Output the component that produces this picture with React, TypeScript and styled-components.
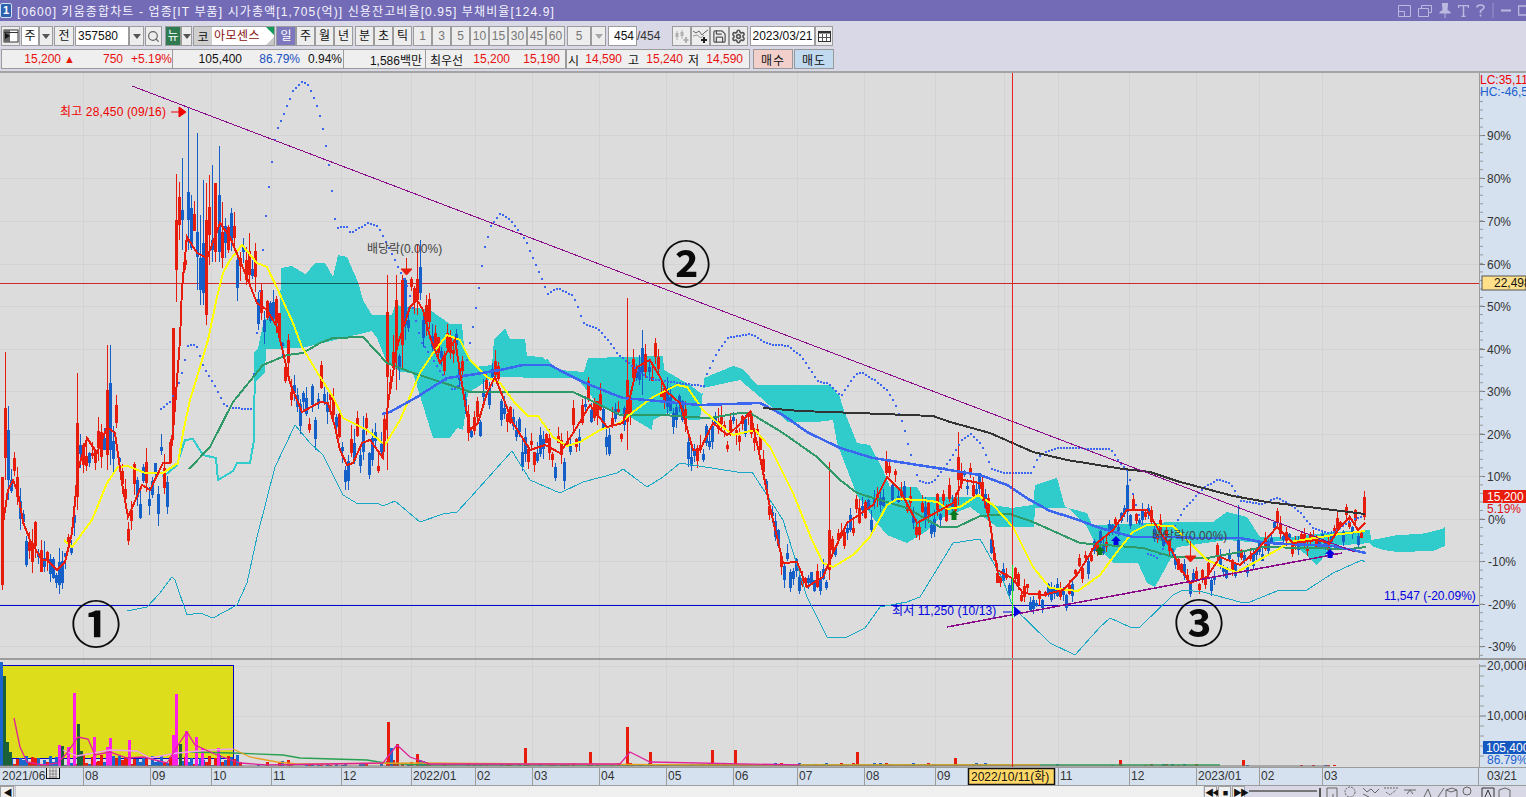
import React from 'react';
import styled, { createGlobalStyle } from 'styled-components';
import { Search, Settings, Save } from 'lucide-react';

const FONT = `"Liberation Sans", "Noto Sans CJK KR", sans-serif`;
const RED = '#e81c0c';
const CANDLE_BLUE = '#1560c8';
const AXIS_BG = '#d6e1ef';

type P = [number, number];

const GlobalStyle = createGlobalStyle`
  html, body { margin: 0; padding: 0; background: #d8d8e6; overflow: hidden; }
  body { font-family: ${FONT}; font-size: 12px; color: #111; }
`;

const Page = styled.div`
  width: 1526px;
  height: 797px;
  overflow: hidden;
  display: flex;
  flex-direction: column;
`;

const TitleBar = styled.div`
  height: 21px;
  background: #736bb5;
  color: #f4f4ff;
  display: flex;
  align-items: center;
  flex: none;
`;

const WinBadge = styled.div`
  width: 10px;
  height: 13px;
  margin: 0 5px 0 0;
  border: 1px solid #cfe0f4;
  border-radius: 2px;
  background: #2f62ae;
  color: #fff;
  font-size: 11px;
  font-weight: bold;
  line-height: 13px;
  text-align: center;
`;

const TitleText = styled.span`
  font-size: 12px;
  letter-spacing: 1.12px;
  white-space: nowrap;
`;

const TitleIcons = styled.div`
  margin-left: auto;
  display: flex;
  align-items: center;
  gap: 7px;
  margin-right: -2px;
`;

const Toolbars = styled.div`
  height: 50px;
  background: #d8d8e6;
  flex: none;
  padding-left: 1px;
  box-sizing: border-box;
`;

const Row1 = styled.div`
  display: flex;
  height: 20px;
  margin-top: 5px;
  align-items: stretch;
`;

const Row2 = styled.div`
  display: flex;
  height: 20px;
  margin-top: 3px;
  align-items: stretch;
`;

const Btn = styled.div<{
  $w: number;
  $gap?: number;
  $before?: number;
  $off?: boolean;
  $tone?: 'sel' | 'green' | 'white';
  $align?: 'flex-start' | 'flex-end';
}>`
  width: ${p => p.$w}px;
  margin-right: ${p => p.$gap ?? 0}px;
  margin-left: ${p => p.$before ?? 0}px;
  padding: 0 ${p => (p.$align ? 2 : 0)}px;
  box-sizing: border-box;
  border: 1px solid #9c9c9c;
  background: ${p => (p.$tone === 'sel' ? '#7d78bd' : p.$tone === 'green' ? '#2f7a50' : p.$tone === 'white' ? '#fff' : '#ededed')};
  color: ${p => (p.$off ? '#777' : p.$tone === 'sel' || p.$tone === 'green' ? '#fff' : '#111')};
  display: flex;
  align-items: center;
  justify-content: ${p => p.$align ?? 'center'};
  flex: none;
  font-size: 12px;
  line-height: 1;
`;

const Caret = styled.div<{ $off?: boolean }>`
  width: 0;
  height: 0;
  border-left: 4px solid transparent;
  border-right: 4px solid transparent;
  border-top: 5px solid ${p => (p.$off ? '#a8a8a8' : '#555')};
`;

const NameBox = styled.div`
  width: 82px;
  margin-right: 1px;
  box-sizing: border-box;
  border: 1px solid #9c9c9c;
  background: #fff;
  display: flex;
  position: relative;
  flex: none;
`;

const NameTag = styled.div`
  width: 18px;
  background: #cfcfcf;
  display: flex;
  align-items: center;
  justify-content: center;
`;

const NameText = styled.div`
  color: #8a0f0f;
  padding-left: 2px;
  line-height: 18px;
  letter-spacing: 0.5px;
`;

const CornerTop = styled.div`
  position: absolute;
  right: 0;
  top: 0;
  border-top: 8px solid #129a5a;
  border-left: 8px solid transparent;
`;

const CornerBottom = styled.div`
  position: absolute;
  right: 0;
  bottom: 0;
  border-bottom: 8px solid #c8c8c8;
  border-left: 8px solid transparent;
`;

const Plain = styled.div<{ $w: number }>`
  width: ${p => p.$w}px;
  color: #333;
  line-height: 20px;
  flex: none;
`;

const QuoteGroup = styled.div<{ $w: number; $gap?: number }>`
  width: ${p => p.$w}px;
  margin-right: ${p => p.$gap ?? 0}px;
  box-sizing: border-box;
  background: #efefef;
  border: 1px solid #9c9c9c;
  border-left-width: ${p => (p.$gap === undefined ? 0 : 1)}px;
  display: flex;
  align-items: center;
  flex: none;
  white-space: nowrap;
`;

const Val = styled.span<{ $w: number; $c?: string }>`
  width: ${p => p.$w}px;
  color: ${p => p.$c ?? '#111'};
  text-align: right;
  flex: none;
`;

const UpMark = styled.span`
  width: 14px;
  color: ${RED};
  font-size: 11px;
  text-align: right;
  flex: none;
`;

const Trade = styled.div<{ $bg: string; $gap?: number }>`
  width: 40px;
  margin-right: ${p => p.$gap ?? 0}px;
  box-sizing: border-box;
  border: 1px solid #999;
  background: ${p => p.$bg};
  display: flex;
  align-items: center;
  justify-content: center;
  letter-spacing: 1px;
  flex: none;
`;

const Chart = styled.div`
  flex: none;
  border-top: 2px solid #a4a4a4;
  background: #dcdcdc;
  display: flex;
  flex-direction: column;
`;

const Pane = styled.div<{ $h: number; $rule: number }>`
  height: ${p => p.$h}px;
  display: flex;
  border-bottom: ${p => p.$rule}px solid #9c9c9c;
  flex: none;
`;

const PlotSvg = styled.svg`
  display: block;
  width: 1479px;
  height: 100%;
  flex: none;
  font-family: ${FONT};
  font-size: 12px;
`;

const AxisSvg = styled.svg`
  display: block;
  width: 47px;
  height: 100%;
  flex: none;
  background: ${AXIS_BG};
  font-family: ${FONT};
  font-size: 12px;
`;

const DateSvg = styled.svg`
  display: block;
  width: 1526px;
  height: 100%;
  background: ${AXIS_BG};
  font-family: ${FONT};
  font-size: 12px;
`;

const Label = styled.text<{ $c?: string; $ls?: number }>`
  fill: ${p => p.$c ?? '#333'};
  letter-spacing: ${p => p.$ls ?? 0}px;
`;

const BigMark = styled.text`
  fill: #0a0a0a;
  font-size: 50px;
  font-weight: 700;
  font-family: "Noto Sans CJK KR", sans-serif;
  text-anchor: middle;
`;

const Bottom = styled.div`
  height: 11px;
  background: #d8d8e6;
  display: flex;
  overflow: hidden;
  flex: none;
`;

const ScrollBtn = styled.div<{ $w: number; $gap?: number }>`
  width: ${p => p.$w}px;
  height: 16px;
  margin-right: ${p => p.$gap ?? 0}px;
  box-sizing: border-box;
  background: #f0f0f0;
  border: 1px solid #a0a0a0;
  flex: none;
  color: #111;
  font-size: 9px;
  line-height: 12px;
  text-align: center;
  letter-spacing: -2px;
`;

const ScrollTrack = styled.div`
  width: 1187px;
  margin-right: 1px;
  height: 16px;
  background: #f0f0f0;
  border-left: 1px solid #c8c8c8;
  flex: none;
`;

const Slider = styled.div`
  width: 72px;
  height: 16px;
  margin: 0 3px 0 4px;
  flex: none;
  position: relative;
  &::before {
    content: '';
    position: absolute;
    left: 0;
    right: 4px;
    top: 4px;
    height: 2px;
    background: #777;
  }
  &::after {
    content: '';
    position: absolute;
    right: 0;
    top: 2px;
    width: 2px;
    height: 12px;
    background: #555;
  }
`;

const ToolSvg = styled.svg`
  display: block;
  flex: none;
  width: 190px;
  height: 11px;
`;

// ----- chart data, in page coordinates -----

const MA5: P[] = [[2,530],[8,490],[13,480],[18,493],[23,522],[30,540],[42,560],[47,560],[57,570],[65,562],[72,533],[78,470],[87,438],[97,453],[107,427],[115,433],[122,483],[128,517],[142,485],[150,490],[163,463],[170,463],[175,407],[180,340],[182,288],[187,237],[197,253],[207,258],[220,223],[230,237],[243,268],[257,303],[267,310],[277,327],[283,352],[290,383],[302,412],[320,402],[328,403],[335,427],[340,450],[347,465],[353,463],[362,443],[370,440],[383,458],[388,403],[393,373],[397,347],[410,307],[417,300],[423,310],[430,337],[440,363],[455,340],[465,403],[470,430],[478,423],[487,393],[495,377],[513,423],[530,450],[545,445],[560,453],[575,430],[590,405],[607,427],[623,423],[630,397],[637,367],[650,360],[660,377],[667,392],[680,403],[693,450],[700,450],[713,423],[727,435],[737,427],[750,412],[760,457],[770,507],[783,563],[797,562],[807,587],[823,577],[833,553],[847,523],[873,505],[887,477],[900,490],[917,523],[937,512],[953,503],[963,480],[980,483],[990,523],[997,570],[1012,578],[1023,593],[1033,594],[1043,595],[1063,590],[1077,575],[1097,543],[1113,530],[1127,510],[1147,510],[1157,527],[1170,547],[1180,567],[1190,583],[1207,577],[1220,557],[1240,565],[1257,550],[1277,527],[1293,543],[1317,540],[1330,543],[1340,527],[1350,517],[1358,530],[1365,523]];

const MA20: P[] = [[64,540],[72,547],[92,520],[107,483],[118,467],[128,466],[145,473],[163,473],[178,463],[183,433],[190,400],[197,377],[208,340],[217,297],[223,273],[230,260],[242,245],[257,263],[267,267],[278,290],[293,323],[302,347],[317,372],[333,397],[343,418],[367,430],[385,445],[400,420],[420,373],[433,353],[447,335],[460,340],[470,360],[487,377],[500,383],[515,403],[528,416],[538,416],[553,437],[567,446],[580,442],[600,430],[620,423],[633,412],[653,397],[677,385],[687,387],[703,410],[720,425],[733,435],[755,430],[770,447],[793,493],[812,540],[823,563],[833,567],[853,555],[870,537],[887,505],[897,499],[923,500],[937,502],[948,509],[960,507],[978,495],[993,505],[1013,527],[1033,567],[1050,588],[1078,591],[1100,575],[1117,552],[1133,532],[1147,525],[1173,526],[1190,543],[1207,560],[1230,570],[1237,572],[1277,550],[1290,542],[1333,535],[1365,531]];

const MA60: P[] = [[189,469],[210,447],[233,402],[263,365],[287,355],[303,353],[320,343],[333,338],[363,337],[387,363],[413,373],[450,385],[470,392],[517,392],[543,392],[573,392],[590,400],[620,415],[663,415],[690,417],[710,418],[740,413],[750,413],[783,433],[817,457],[840,480],[857,493],[880,500],[907,508],[940,527],[957,527],[980,516],[1010,514],[1033,522],[1080,543],[1143,548],[1173,557],[1207,558],[1240,552],[1263,547],[1350,549],[1366,547]];

const MA120: P[] = [[382,414],[390,412],[417,397],[447,378],[470,375],[500,370],[523,365],[550,365],[563,372],[583,382],[610,393],[623,398],[647,400],[677,403],[700,405],[760,403],[783,415],[807,432],[840,448],[873,458],[937,468],[980,475],[1007,485],[1030,500],[1050,511],[1073,518],[1100,528],[1133,537],[1167,537],[1200,538],[1240,538],[1267,543],[1333,546],[1366,553]];

const MA240: P[] = [[763,408],[800,411],[857,413],[933,416],[950,422],[990,433],[1033,452],[1067,460],[1123,469],[1150,472],[1180,482],[1207,489],[1233,496],[1267,502],[1317,508],[1365,514]];

const BAND_LOW: P[] = [[127,611],[147,607],[160,593],[172,577],[175,580],[187,615],[200,613],[213,618],[237,605],[247,583],[257,537],[275,467],[295,425],[310,443],[323,455],[343,495],[358,504],[377,503],[383,506],[395,501],[420,522],[443,514],[457,512],[470,498],[512,451],[530,480],[560,493],[583,482],[617,473],[623,469],[647,487],[663,477],[680,463],[737,472],[752,472],[783,520],[807,597],[827,637],[847,637],[865,628],[880,607],[907,602],[920,597],[953,543],[980,539],[1003,580],[1013,607],[1050,643],[1075,655],[1100,627],[1110,618],[1130,627],[1140,627],[1173,595],[1183,590],[1203,592],[1240,602],[1250,602],[1277,591],[1307,590],[1333,573],[1362,560],[1365,562]];

const BAND_UP: P[] = [[160,408],[170,400],[180,377],[187,345],[195,343],[203,367],[213,383],[223,403],[228,407],[250,408],[252,387],[263,235],[267,195],[272,152],[275,132],[285,108],[292,90],[302,80],[308,85],[317,107],[323,132],[330,177],[333,215],[337,227],[345,225],[350,232],[367,222],[377,225],[383,237],[393,257],[407,287],[420,340],[452,390],[462,380],[470,337],[473,320],[478,287],[483,250],[490,225],[500,212],[510,220],[525,240],[543,283],[547,293],[557,287],[572,295],[578,308],[582,322],[597,328],[608,340],[617,353],[637,370],[650,378],[677,382],[703,385],[705,375],[717,350],[727,337],[750,333],[767,343],[787,345],[800,355],[817,380],[828,383],[840,395],[855,373],[862,372],[875,380],[887,390],[895,405],[903,425],[908,448],[918,480],[927,483],[935,478],[950,458],[960,440],[970,433],[980,443],[987,458],[990,468],[1003,472],[1030,472],[1037,457],[1043,452],[1058,447],[1110,448],[1120,463],[1127,470],[1133,497],[1143,530],[1147,553],[1157,557],[1173,527],[1183,508],[1203,487],[1217,478],[1230,483],[1240,500],[1260,503],[1277,497],[1287,502],[1300,512],[1312,527],[1330,533],[1350,520],[1362,515]];

const SENKOU: P[] = [[162,476],[168,473],[177,465],[185,440],[193,439],[203,455],[216,458],[218,480],[233,471],[237,463],[250,463],[254,440],[255,352]];

const CLOUD_TOP: P[] = [[255,352],[258,348],[264,320],[280,313],[281,268],[292,266],[302,272],[305,275],[315,263],[325,263],[333,277],[338,255],[347,257],[358,282],[363,300],[372,315],[392,315],[395,305],[430,310],[450,324],[462,324],[464,347],[475,367],[492,365],[494,340],[505,328],[510,339],[525,339],[527,356],[542,357],[545,360],[547,358],[552,365],[560,370],[584,372],[588,358],[663,356],[664,370],[690,385],[703,395],[704,378],[733,366],[743,369],[757,385],[830,385],[840,397],[843,408],[857,443],[870,445],[883,470],[890,487],[917,487],[923,497],[987,497],[993,505],[1012,508],[1033,505],[1035,485],[1057,478],[1065,507],[1087,513],[1092,525],[1150,523],[1177,522],[1213,522],[1227,512],[1247,517],[1260,537],[1290,537],[1333,532],[1370,530],[1371,540],[1383,538],[1397,535],[1420,534],[1430,532],[1442,529],[1445,526]];

const CLOUD_BOTTOM: P[] = [[255,382],[265,373],[266,349],[302,348],[372,331],[377,338],[387,363],[400,372],[413,373],[433,438],[450,438],[457,428],[463,430],[468,393],[493,377],[553,378],[577,378],[600,407],[630,417],[652,430],[653,420],[667,413],[690,420],[700,420],[703,388],[740,380],[760,397],[788,422],[817,422],[833,420],[837,443],[850,477],[857,495],[877,523],[887,535],[907,543],[927,531],[937,520],[970,507],[997,527],[1034,527],[1035,508],[1068,508],[1087,527],[1097,547],[1113,563],[1138,563],[1147,583],[1155,587],[1177,547],[1227,540],[1260,543],[1290,540],[1317,565],[1333,546],[1370,543],[1372,546],[1383,550],[1397,552],[1433,551],[1445,546]];

const MONTHS: { x: number; t: string }[] = [
  { x: 83, t: '08' }, { x: 150, t: '09' }, { x: 211, t: '10' }, { x: 271, t: '11' }, { x: 341, t: '12' },
  { x: 411, t: '2022/01' }, { x: 475, t: '02' }, { x: 532, t: '03' }, { x: 599, t: '04' }, { x: 666, t: '05' },
  { x: 733, t: '06' }, { x: 797, t: '07' }, { x: 864, t: '08' }, { x: 935, t: '09' }, { x: 1058, t: '11' },
  { x: 1129, t: '12' }, { x: 1196, t: '2023/01' }, { x: 1259, t: '02' }, { x: 1322, t: '03' },
];

const PCT: { y: number; t: string }[] = [
  { y: 135, t: '90%' }, { y: 178, t: '80%' }, { y: 221, t: '70%' }, { y: 264, t: '60%' }, { y: 306, t: '50%' },
  { y: 349, t: '40%' }, { y: 391, t: '30%' }, { y: 434, t: '20%' }, { y: 476, t: '10%' }, { y: 519, t: '0%' },
  { y: 561, t: '-10%' }, { y: 604, t: '-20%' }, { y: 646, t: '-30%' },
];

// x, body top, body bottom, wick top, wick bottom, red?
const KEY_CANDLES: [number, number, number, number, number, boolean][] = [
  [3,477,585,477,590,true],[6,408,458,352,480,true],[9,430,480,406,500,false],[77,423,497,373,510,true],
  [107,390,455,345,470,true],[110,383,450,345,465,false],[173,328,425,328,440,true],[177,220,270,174,302,true],
  [180,197,225,182,240,true],[183,210,220,158,250,false],[187,192,220,108,250,false],[190,208,248,195,250,false],
  [196,232,257,133,290,false],[199,258,290,215,305,false],[203,243,293,180,305,false],[205,220,315,183,325,true],
  [209,207,235,175,265,true],[212,240,250,165,262,false],[215,183,252,183,262,true],[218,195,252,146,262,false],
  [221,232,258,202,268,true],[388,312,377,275,470,true],[416,279,300,245,315,true],[419,267,293,240,300,false],
  [395,300,350,275,390,true],[401,280,345,275,370,true],[406,280,325,278,340,false],
  [627,380,422,298,450,true],[643,348,372,330,395,false],[830,530,570,462,580,true],[957,457,480,432,505,true],
  [1127,485,512,470,522,false],[1237,540,557,505,562,false],[1365,497,517,491,520,true],
];

// x, top, colour
const KEY_VOLUME: [number, number, string][] = [
  [1,662,'#1a66cc'],[4,676,'#1a6038'],[7,742,'#1a6038'],[10,752,'#1a6038'],[59,745,'#ff20e8'],[62,746,'#1a6038'],
  [68,747,'#ff20e8'],[74,693,'#ff20e8'],[78,724,'#1a6038'],[81,751,'#1a6038'],[94,737,'#ff20e8'],[107,747,'#ff20e8'],
  [110,738,'#ff20e8'],[129,740,'#ff20e8'],[173,735,'#ff20e8'],[176,694,'#ff20e8'],[180,744,'#1a6038'],[186,731,'#ff20e8'],
  [196,737,'#ff20e8'],[202,748,'#ff20e8'],[218,748,'#ff20e8'],[388,722,RED],[391,748,'#1a66cc'],[397,744,RED],
  [417,754,RED],[627,727,RED],[525,748,RED],[590,752,RED],[650,752,RED],[712,750,RED],[735,750,RED],[857,752,RED],
  [955,758,RED],[1120,760,RED],[1243,760,RED],
];

const VOL_PINK: P[] = [[14,718],[20,747],[27,762],[43,765],[58,763],[67,753],[78,737],[88,739],[95,755],[110,752],[127,758],[143,757],[167,763],[180,742],[187,732],[195,745],[217,755],[240,763],[267,765],[383,763],[397,745],[410,757],[430,764],[620,764],[630,752],[650,762],[800,765]];
const VOL_LILAC: P[] = [[63,750],[77,756],[110,750],[137,751],[150,758],[177,753],[210,750],[233,749]];
const VOL_ORANGE: P[] = [[233,749],[250,757],[277,762],[297,764],[420,763],[700,765],[1040,765]];
const VOL_GREEN: P[] = [[190,752],[233,753],[283,755],[300,758],[367,760],[385,763],[420,765],[1220,765]];

function toPoints(list: P[]): string {
  return list.map(p => p.join(',')).join(' ');
}

function yAt(path: P[], x: number): number {
  if (x <= path[0][0]) return path[0][1];
  for (let i = 1; i < path.length; i++) {
    if (x <= path[i][0]) {
      const [x0, y0] = path[i - 1];
      const [x1, y1] = path[i];
      return y0 + ((y1 - y0) * (x - x0)) / (x1 - x0 || 1);
    }
  }
  return path[path.length - 1][1];
}

function seeded(seed: number) {
  let s = seed;
  return () => {
    s = (s + 0x6d2b79f5) | 0;
    let t = Math.imul(s ^ (s >>> 15), 1 | s);
    t = (t + Math.imul(t ^ (t >>> 7), 61 | t)) ^ t;
    return ((t ^ (t >>> 14)) >>> 0) / 4294967296;
  };
}

function swing(x: number): number {
  if (x < 175) return 30;
  if (x < 260) return 36;
  if (x < 385) return 28;
  if (x < 430) return 32;
  if (x < 760) return 22;
  if (x < 1000) return 18;
  return 13;
}

type Candle = { x: number; top: number; bottom: number; hi: number; lo: number; red: boolean };

function buildCandles(): Candle[] {
  const rand = seeded(11);
  const out: Candle[] = [];
  for (let i = 0; i < 454; i++) {
    const x = Math.round(2 + i * 3.007);
    const amp = swing(x);
    const mid = yAt(MA5, x);
    const a = mid + (rand() - 0.5) * amp * 1.5;
    const b = a + (rand() - 0.5) * amp * 1.5;
    const top = Math.min(a, b);
    const bottom = Math.max(a, b) + 3;
    out.push({ x, top, bottom, hi: top - rand() * amp * 0.55, lo: bottom + rand() * amp * 0.45, red: b < a });
  }
  KEY_CANDLES.forEach(([x, top, bottom, hi, lo, red]) => {
    const c = out[Math.round((x - 2) / 3.007)];
    Object.assign(c, { top, bottom, hi, lo, red });
  });
  return out;
}

const CANDLES = buildCandles();

function buildVolumeBars() {
  const rand = seeded(5);
  const bars: { x: number; top: number; c: string }[] = [];
  for (const c of CANDLES) {
    if (c.x > 1340) continue;
    const max = c.x < 240 ? 10 : c.x < 300 ? 5 : c.x < 380 ? 2 : c.x < 430 ? 6 : c.x < 1000 ? 2 : 1;
    const show = c.x < 240 ? true : rand() > (c.x < 1000 ? 0.55 : 0.8);
    if (show) bars.push({ x: c.x, top: 766 - (rand() * max + 1), c: c.red ? RED : '#1a66cc' });
  }
  KEY_VOLUME.forEach(([x, top, c]) => bars.push({ x, top, c }));
  return bars;
}

const VOLUME = buildVolumeBars();

const DOTS: P[] = [];
for (let x = 160; x <= 1362; x += 3) DOTS.push([x, Math.round(yAt(BAND_UP, x))]);

const PanelIcon = () => (
  <svg width="16" height="16" viewBox="0 0 16 16">
    <rect x="1" y="2" width="14" height="12" fill="#fff" stroke="#333" />
    <path d="M1 2h6v12H1z" fill="#666" />
    <path d="M2 5l5 3-5 3z" fill="#111" />
    <path d="M1 4.500h14" stroke="#333" />
  </svg>
);

const CandleIcon = () => (
  <svg width="16" height="16" viewBox="0 0 16 16">
    <path d="M3 3v9M8 2v9" stroke="#b0b0b0" />
    <rect x="1.500" y="5" width="3" height="4" fill="#b0b0b0" />
    <rect x="6.500" y="4" width="3" height="4" fill="#b0b0b0" />
    <path d="M12 9v6M9.500 12h5" stroke="#b0b0b0" strokeWidth="2" />
  </svg>
);

const TrendPlusIcon = () => (
  <svg width="17" height="16" viewBox="0 0 17 16">
    <path d="M1 3l3 2 3-2 3 4 3-3 3-2" fill="none" stroke="#666" />
    <path d="M1 8l4-1 4 3 3-3" fill="none" stroke="#999" />
    <path d="M12 9v6M9 12h6" stroke="#222" strokeWidth="2" />
  </svg>
);

const CalendarIcon = () => (
  <svg width="13" height="11" viewBox="0 0 13 11">
    <rect x="0.500" y="0.500" width="12" height="10" fill="#fff" stroke="#333" />
    <rect x="0.500" y="0.500" width="12" height="2" fill="#333" />
    <path d="M4.500 3v7M8.500 3v7M1 6.500h11" stroke="#555" />
  </svg>
);

const TitleIconSet = () => (
  <TitleIcons>
    <svg width="13" height="12" viewBox="0 0 13 12"><path d="M.5.5h12v11H.5zM.5 6.500h6v5" fill="none" stroke="#bcb8e0" /></svg>
    <svg width="14" height="12" viewBox="0 0 14 12"><path d="M3.500 3.500V.5h10v7h-3M.5 3.500h10v8H.5z" fill="none" stroke="#bcb8e0" /></svg>
    <svg width="12" height="15" viewBox="0 0 12 15"><path d="M3 0h6v1.500L8.500 7 11.500 9v1.500h-5V15h-1v-4.500h-5V9L3.500 7 3 1.500z" fill="#bcb8e0" /></svg>
    <svg width="11" height="12" viewBox="0 0 11 12"><path d="M.5 3V.5h10V3M5.500.5v11M3.500 11.500h4" fill="none" stroke="#bcb8e0" strokeWidth="1.500" /></svg>
    <svg width="9" height="13" viewBox="0 0 9 13"><path d="M1 3.500C1 1.500 2.500 1 4.500 1S8 2 8 3.500 6 5.500 4.500 7v2M4.500 10.500v2" fill="none" stroke="#bcb8e0" strokeWidth="1.600" /></svg>
    <svg width="2" height="15" viewBox="0 0 2 15"><path d="M1 0v15" stroke="#9a95cc" /></svg>
    <svg width="10" height="3" viewBox="0 0 10 3"><path d="M0 1.500h10" stroke="#bcb8e0" strokeWidth="2" /></svg>
    <svg width="10" height="11" viewBox="0 0 10 11"><path d="M.5 1h12v9H.5z" fill="none" stroke="#bcb8e0" strokeWidth="1.500" /></svg>
  </TitleIcons>
);

const PricePlot = () => (
  <PlotSvg viewBox="0 73 1479 585">
    {PCT.map(p => <line key={p.y} x1="0" x2="1479" y1={p.y + 0.5} y2={p.y + 0.5} stroke="#d3d3d3" />)}
    {MONTHS.map(m => <line key={m.x} x1={m.x + 0.5} x2={m.x + 0.5} y1="73" y2="658" stroke="#d3d3d3" />)}
    <line x1="1004.500" x2="1004.500" y1="73" y2="658" stroke="#d3d3d3" />

    <polygon fill="#30cccc" shapeRendering="crispEdges" points={toPoints([...CLOUD_TOP, ...[...CLOUD_BOTTOM].reverse()])} />
    <polyline fill="none" stroke="#30cccc" strokeWidth="2" shapeRendering="crispEdges" points={toPoints(SENKOU)} />

    <line x1="0" x2="1479" y1="283.500" y2="283.500" stroke="#cc2a2a" />
    <line x1="281" x2="358" y1="283.500" y2="283.500" stroke="#155" />
    <line x1="0" x2="1479" y1="605.500" y2="605.500" stroke="#0000d0" />

    {CANDLES.map(c => (
      <g key={c.x} shapeRendering="crispEdges">
        <line x1={c.x + 0.5} x2={c.x + 0.5} y1={c.hi} y2={c.lo} stroke={c.red ? RED : CANDLE_BLUE} />
        <rect x={c.x - 1} y={c.top} width="3" height={c.bottom - c.top} fill={c.red ? RED : CANDLE_BLUE} />
      </g>
    ))}

    {DOTS.map(([x, y]) => <rect key={x} x={x} y={y} width="2" height="2" fill="#3a66f0" />)}

    <g fill="none" shapeRendering="crispEdges">
      <polyline stroke="#18a8c4" strokeWidth="1" points={toPoints(BAND_LOW)} />
      <polyline stroke="#2f9a68" strokeWidth="2" points={toPoints(MA60)} />
      <polyline stroke="#ffff00" strokeWidth="2" points={toPoints(MA20)} />
      <polyline stroke="#3a66f0" strokeWidth="2.500" points={toPoints(MA120)} />
      <polyline stroke="#333333" strokeWidth="2" points={toPoints(MA240)} />
      <polyline stroke={RED} strokeWidth="2" points={toPoints(MA5)} />
      <line x1="132" y1="86" x2="1355" y2="552" stroke="#8a0a8a" />
      <line x1="947" y1="627" x2="1342" y2="553" stroke="#8a0a8a" strokeWidth="1.500" />
    </g>

    <line x1="1012.500" x2="1012.500" y1="73" y2="658" stroke="#e82020" />
    <line x1="1012.500" x2="1012.500" y1="565" y2="618" stroke="#20e020" />

    <Label x="60" y="116" $c="#f00000" $ls={0.15}>최고 28,450 (09/16)</Label>
    <path d="M171 112h10M179 107l7 5-7 5z" fill="#f00000" stroke="#f00000" />
    <Label x="367" y="253" $c="#444">배당락(0.00%)</Label>
    <path d="M406.500 258v11M401 269h11l-5.500 6z" fill={RED} stroke={RED} />
    <Label x="1152" y="540" $c="#444">배당락(0.00%)</Label>
    <path d="M1190.500 541v15M1185 556h11l-5.500 6z" fill={RED} stroke={RED} />
    <Label x="892" y="615" $c="#0000e0" $ls={0.1}>최저 11,250 (10/13)</Label>
    <path d="M1003 612h9" stroke="#0000e0" />
    <path d="M1014 606l7 6-7 5z" fill="#0000e0" />
    <Label x="1384" y="600" $c="#0000e0">11,547 (-20.09%)</Label>

    <path d="M954 510l5 5h-2.500v5h-5v-5H949z" fill="#0a7a20" />
    <path d="M1100 546l5 5h-2.500v4h-5v-4H1095z" fill="#0a7a20" />
    <path d="M1116 536l5 5h-2.500v4h-5v-4H1111z" fill="#0000e0" />
    <path d="M1330 549l5 5h-2.500v4h-5v-4H1325z" fill="#0000e0" />

    <BigMark x="96" y="643">①</BigMark>
    <BigMark x="686" y="283">②</BigMark>
    <BigMark x="1199" y="642">③</BigMark>
  </PlotSvg>
);

const PriceAxis = () => (
  <AxisSvg viewBox="1479 73 47 585">
    <line x1="1479.500" x2="1479.500" y1="73" y2="658" stroke="#9c9c9c" />
    {PCT.map(p => <line key={p.y} x1="1480" x2="1485" y1={p.y + 0.5} y2={p.y + 0.5} stroke="#777" />)}
    {Array.from({ length: 70 }, (_, i) => 93 + i * 8.52).map(y => (
      <line key={y} x1="1480" x2="1483" y1={y} y2={y} stroke="#999" />
    ))}
    {PCT.filter(p => p.y !== 519).map(p => <Label key={p.y} x={p.t.startsWith('-') ? 1488 : 1487} y={p.y + 5}>{p.t}</Label>)}
    <Label x="1488" y="524" $c="#333">0%</Label>
    <Label x="1480" y="84" $c="#f00000">LC:35,11</Label>
    <Label x="1480" y="96" $c="#1a60d0">HC:-46,5</Label>
    <rect x="1482" y="276" width="44" height="14" fill="#ffe08a" stroke="#555" />
    <Label x="1494" y="287" $c="#111">22,498</Label>
    <rect x="1483" y="490" width="43" height="13" fill={RED} />
    <Label x="1487" y="501" $c="#fff">15,200</Label>
    <Label x="1487" y="513" $c="#e01010">5.19%</Label>
  </AxisSvg>
);

const VolumePlot = () => (
  <PlotSvg viewBox="0 660 1479 107">
    {MONTHS.map(m => <line key={m.x} x1={m.x + 0.5} x2={m.x + 0.5} y1="660" y2="767" stroke="#d3d3d3" />)}
    <line x1="0" x2="1479" y1="666.500" y2="666.500" stroke="#d3d3d3" />
    <line x1="0" x2="1479" y1="716.500" y2="716.500" stroke="#d3d3d3" />
    <rect x="2.500" y="665.500" width="231" height="93" fill="#dedd1c" stroke="#0000c8" />
    {VOLUME.map((b, i) => <rect key={i} x={b.x - 1} y={b.top} width="3" height={766 - b.top} fill={b.c} shapeRendering="crispEdges" />)}
    <g fill="none" strokeWidth="1.300">
      <polyline stroke="#28a050" points={toPoints(VOL_GREEN)} />
      <polyline stroke="#e8a020" points={toPoints(VOL_ORANGE)} />
      <polyline stroke="#f0a0f0" points={toPoints(VOL_LILAC)} />
      <polyline stroke="#e0209a" points={toPoints(VOL_PINK)} />
    </g>
    <line x1="0" x2="1330" y1="766" y2="766" stroke="#777" />
    <line x1="1012.500" x2="1012.500" y1="660" y2="767" stroke="#e82020" />
  </PlotSvg>
);

const VolumeAxis = () => (
  <AxisSvg viewBox="1479 660 47 107">
    <line x1="1479.500" x2="1479.500" y1="664" y2="767" stroke="#9c9c9c" />
    {[666, 716].map(y => <line key={y} x1="1480" x2="1486" y1={y} y2={y} stroke="#777" />)}
    {[676, 686, 696, 706, 726, 736, 746, 756].map(y => <line key={y} x1="1480" x2="1484" y1={y} y2={y} stroke="#999" />)}
    <Label x="1487" y="670">20,000K</Label>
    <Label x="1487" y="720">10,000K</Label>
    <rect x="1483" y="741" width="43" height="13" fill="#1558c0" />
    <Label x="1486" y="752" $c="#fff">105,400</Label>
    <Label x="1487" y="764" $c="#1a60d0">86.79%</Label>
  </AxisSvg>
);

const DateAxis = () => (
  <Pane $h={17} $rule={1}>
    <DateSvg viewBox="0 768 1526 17">
      <Label x="2" y="780">2021/06</Label>
      <rect x="46.500" y="767.500" width="13" height="11" fill="#e8e8e8" stroke="#111" />
      <path d="M49 771h8M49 774h8M49 777h8M50 768v10M53 768v10M56 768v10" stroke="#888" />
      {MONTHS.map(m => (
        <g key={m.x}>
          <line x1={m.x + 0.5} x2={m.x + 0.5} y1="768" y2="785" stroke="#9c9c9c" />
          <Label x={m.x + 2} y="780">{m.t}</Label>
        </g>
      ))}
      <rect x="968.500" y="768.500" width="86" height="16" fill="#ffd868" stroke="#111" strokeWidth="1.500" />
      <Label x="971" y="781" $c="#111">2022/10/11(화)</Label>
      <line x1="1478.500" x2="1478.500" y1="768" y2="785" stroke="#9c9c9c" />
      <Label x="1487" y="780">03/21</Label>
    </DateSvg>
  </Pane>
);

const BottomTools = () => (
  <ToolSvg viewBox="0 0 190 11">
    <g fill="none" stroke="#666">
      <path d="M3 2h10v12H3zM9 8v6" />
      <circle cx="26" cy="6" r="5" strokeDasharray="2 1" />
      <path d="M39 2l4 4 4-3 4 4 4-4M39 8l6 3" />
      <path d="M60 2h14M62 6l4 3 6-5" strokeDasharray="2 1" />
      <path d="M80 4h12M83 8l3-4 3 4" />
      <path d="M100 11l4-8 3 8M114 11l6-9" />
      <path d="M122 4l6-2 5 2v7l-6 2-5-2zM122 4l5 2 6-2" />
      <circle cx="143" cy="5" r="4" />
      <path d="M158 2h12v14h-12zM161 11l3-7 3 7" stroke="#333" />
      <path d="M175 4l6-2 5 2v7l-6 2-5-2z" />
    </g>
  </ToolSvg>
);

const App = () => (
  <Page>
    <GlobalStyle />
    <TitleBar>
      <WinBadge>1</WinBadge>
      <TitleText>[0600] 키움종합차트 - 업종[IT 부품] 시가총액[1,705(억)] 신용잔고비율[0.95] 부채비율[124.9]</TitleText>
      <TitleIconSet />
    </TitleBar>

    <Toolbars>
      <Row1>
        <Btn $w={19} $gap={1}><PanelIcon /></Btn>
        <Btn $w={18} $tone="white">주</Btn>
        <Btn $w={14} $gap={1}><Caret /></Btn>
        <Btn $w={20} $gap={1}>전</Btn>
        <Btn $w={54} $tone="white" $align="flex-start">357580</Btn>
        <Btn $w={15} $gap={1}><Caret /></Btn>
        <Btn $w={17} $gap={3}><Search size={13} color="#666" strokeWidth={2.2} /></Btn>
        <Btn $w={16} $tone="green">뉴</Btn>
        <Btn $w={11} $gap={1}><Caret /></Btn>
        <NameBox>
          <NameTag>코</NameTag>
          <NameText>아모센스</NameText>
          <CornerTop />
          <CornerBottom />
        </NameBox>
        <Btn $w={20} $tone="sel">일</Btn>
        <Btn $w={19}>주</Btn>
        <Btn $w={19}>월</Btn>
        <Btn $w={19} $gap={2}>년</Btn>
        <Btn $w={19}>분</Btn>
        <Btn $w={19}>초</Btn>
        <Btn $w={19} $gap={1}>틱</Btn>
        {['1', '3', '5', '10', '15', '30', '45', '60'].map(n => <Btn key={n} $w={19} $off>{n}</Btn>)}
        <Btn $w={24} $off $before={2}>5</Btn>
        <Btn $w={15} $gap={2}><Caret $off /></Btn>
        <Btn $w={29} $tone="white" $align="flex-end">454</Btn>
        <Plain $w={35}>/454</Plain>
        <Btn $w={19} $off><CandleIcon /></Btn>
        <Btn $w={19}><TrendPlusIcon /></Btn>
        <Btn $w={19}><Save size={15} color="#555" /></Btn>
        <Btn $w={19} $gap={2}><Settings size={15} color="#555" strokeWidth={2.6} /></Btn>
        <Btn $w={65} $tone="white">2023/03/21</Btn>
        <Btn $w={18}><CalendarIcon /></Btn>
      </Row1>
      <Row2>
        <QuoteGroup $w={172} $gap={0}>
          <Val $w={59} $c="#e81010">15,200</Val>
          <UpMark>▲</UpMark>
          <Val $w={48} $c="#e81010">750</Val>
          <Val $w={49} $c="#e81010">+5.19%</Val>
        </QuoteGroup>
        <QuoteGroup $w={171}>
          <Val $w={69}>105,400</Val>
          <Val $w={58} $c="#1a50c0">86.79%</Val>
          <Val $w={42}>0.94%</Val>
        </QuoteGroup>
        <QuoteGroup $w={82}>
          <Val $w={78}>1,586백만</Val>
        </QuoteGroup>
        <QuoteGroup $w={140}>
          <Val $w={37}>최우선</Val>
          <Val $w={47} $c="#e81010">15,200</Val>
          <Val $w={50} $c="#e81010">15,190</Val>
        </QuoteGroup>
        <QuoteGroup $w={184} $gap={3}>
          <Val $w={12}>시</Val>
          <Val $w={43} $c="#e81010">14,590</Val>
          <Val $w={17}>고</Val>
          <Val $w={44} $c="#e81010">15,240</Val>
          <Val $w={16}>저</Val>
          <Val $w={44} $c="#e81010">14,590</Val>
        </QuoteGroup>
        <Trade $bg="#f2cfca" $gap={1}>매수</Trade>
        <Trade $bg="#c2daf0">매도</Trade>
      </Row2>
    </Toolbars>

    <Chart>
      <Pane $h={585} $rule={2}>
        <PricePlot />
        <PriceAxis />
      </Pane>
      <Pane $h={107} $rule={1}>
        <VolumePlot />
        <VolumeAxis />
      </Pane>
      <DateAxis />
    </Chart>

    <Bottom>
      <ScrollBtn $w={14} $gap={1}>◀</ScrollBtn>
      <ScrollTrack />
      <ScrollBtn $w={13} $gap={1}>◀◀</ScrollBtn>
      <ScrollBtn $w={13} $gap={1}>■</ScrollBtn>
      <ScrollBtn $w={13}>▶▶</ScrollBtn>
      <Slider />
      <BottomTools />
    </Bottom>
  </Page>
);

export default App;
